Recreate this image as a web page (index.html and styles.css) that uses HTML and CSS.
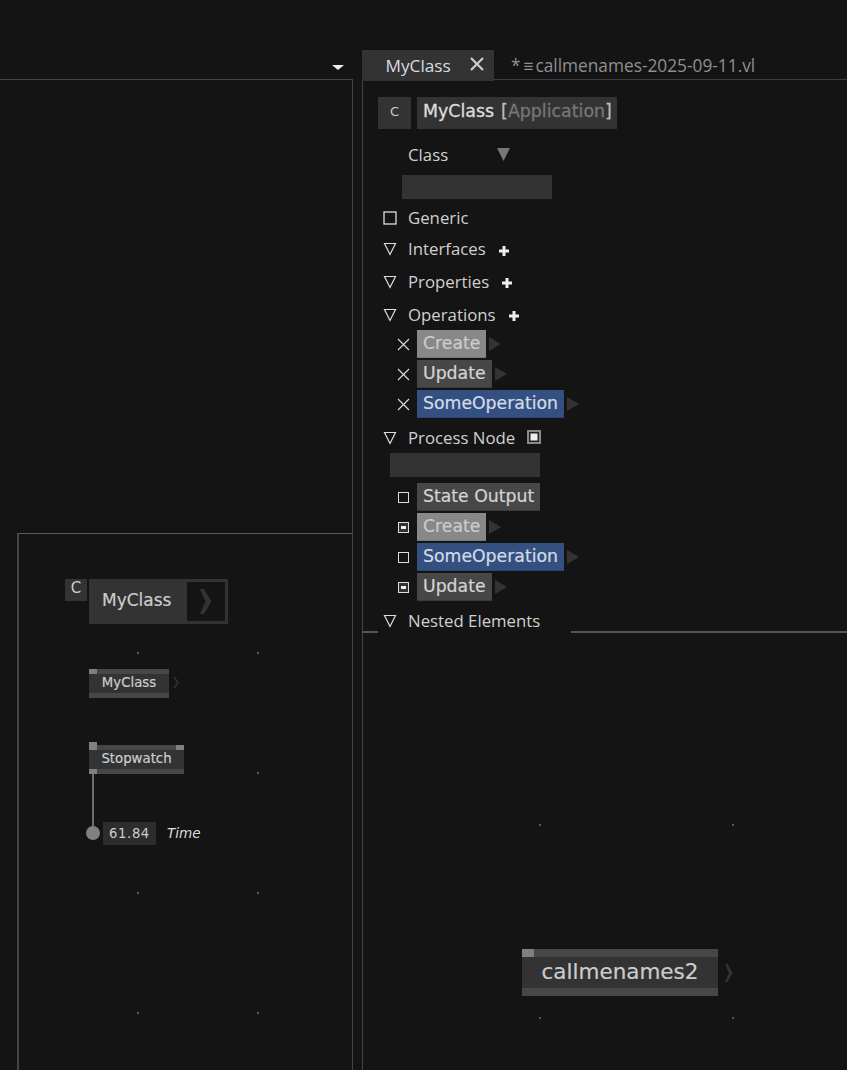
FILE: index.html
```html
<!DOCTYPE html>
<html lang="en">
<head>
<meta charset="utf-8">
<title>MyClass</title>
<link rel="stylesheet" href="styles.css">
</head>
<body>
<div class="app">
  <section class="left">
    <div class="left-head"><span class="doc-menu"></span></div>
    <div class="left-body">
      <div class="patch">
        <i class="dot" style="left:118px;top:118px"></i><i class="dot" style="left:238px;top:118px"></i>
        <i class="dot" style="left:238px;top:238px"></i>
        <i class="dot" style="left:118px;top:358px"></i><i class="dot" style="left:238px;top:358px"></i>
        <i class="dot" style="left:118px;top:478px"></i><i class="dot" style="left:238px;top:478px"></i>
        <div class="c-badge">C</div>
        <div class="def-node"><span class="def-name">MyClass</span><span class="def-open"><svg width="13" height="25" viewBox="0 0 13 25"><path d="M1 0h4l7.500 12.500L5 25H1l5.500-12.500z" fill="#333"/></svg></span></div>
        <div class="node node-myclass"><i class="pin pin-l"></i><span>MyClass</span></div>
        <svg class="chev chev-myclass" width="7" height="13" viewBox="0 0 7 13"><path d="M1 1l4 5.500-4 5.500" fill="none" stroke="#333" stroke-width="1.500"/></svg>
        <div class="node node-stopwatch"><i class="pin pin-l pin-top"></i><i class="pin pin-r"></i><i class="pin pin-b"></i><span>Stopwatch</span></div>
        <i class="link"></i><i class="io-dot"></i>
        <div class="value">61.84</div>
        <div class="value-label">Time</div>
      </div>
    </div>
  </section>
  <section class="right">
    <div class="tabs">
      <div class="tab"><span>MyClass</span><svg class="tab-x" width="16" height="16" viewBox="0 0 16 16"><path d="M2 2l12 12M14 2L2 14" stroke="#ccd" stroke-width="2.200"/></svg></div>
      <div class="tab-doc"><span class="star">*</span><span class="menu">≡</span><span>callmenames-2025-09-11.vl</span></div>
    </div>
    <div class="class-view">
      <div class="title"><div class="title-c">C</div><div class="title-name">MyClass <span class="bracket">[<span class="app-type">Application</span>]</span></div></div>
      <div class="kind"><span>Class</span><svg width="13" height="13" viewBox="0 0 13 13"><path d="M0 0h13L6.500 13z" fill="#777"/></svg></div>
      <div class="input input-a"></div>
      <div class="row row-generic"><svg class="ic" width="14" height="14" viewBox="0 0 14 14"><rect x="1" y="1" width="12" height="12" fill="none" stroke="#ddd" stroke-width="1.300"/></svg><span>Generic</span></div>
      <div class="row row-interfaces"><svg class="ic" width="14" height="14" viewBox="0 0 14 14"><path d="M1.500 1.500h11L7 12.500z" fill="none" stroke="#ddd" stroke-width="1.200"/></svg><span>Interfaces</span><svg class="plus" width="10" height="10" viewBox="0 0 10 10"><path d="M5 0v10M0 5h10" stroke="#eee" stroke-width="3"/></svg></div>
      <div class="row row-gap"><svg class="ic" width="14" height="14" viewBox="0 0 14 14"><path d="M1.500 1.500h11L7 12.500z" fill="none" stroke="#ddd" stroke-width="1.200"/></svg><span>Properties</span><svg class="plus" width="10" height="10" viewBox="0 0 10 10"><path d="M5 0v10M0 5h10" stroke="#eee" stroke-width="3"/></svg></div>
      <div class="row row-gap"><svg class="ic" width="14" height="14" viewBox="0 0 14 14"><path d="M1.500 1.500h11L7 12.500z" fill="none" stroke="#ddd" stroke-width="1.200"/></svg><span>Operations</span><svg class="plus" width="10" height="10" viewBox="0 0 10 10"><path d="M5 0v10M0 5h10" stroke="#eee" stroke-width="3"/></svg></div>
      <div class="ops ops-a">
        <div class="op"><svg class="oc" width="13" height="13" viewBox="0 0 13 13"><path d="M1 1l11 11M12 1L1 12" stroke="#ddd" stroke-width="1.100"/></svg><span class="chip chip-light">Create</span><i class="tri"></i></div>
        <div class="op"><svg class="oc" width="13" height="13" viewBox="0 0 13 13"><path d="M1 1l11 11M12 1L1 12" stroke="#ddd" stroke-width="1.100"/></svg><span class="chip">Update</span><i class="tri"></i></div>
        <div class="op"><svg class="oc" width="13" height="13" viewBox="0 0 13 13"><path d="M1 1l11 11M12 1L1 12" stroke="#ddd" stroke-width="1.100"/></svg><span class="chip chip-blue">SomeOperation</span><i class="tri"></i></div>
      </div>
      <div class="row row-process"><svg class="ic" width="14" height="14" viewBox="0 0 14 14"><path d="M1.500 1.500h11L7 12.500z" fill="none" stroke="#ddd" stroke-width="1.200"/></svg><span>Process Node</span><i class="proc-check"></i></div>
      <div class="input input-b"></div>
      <div class="ops ops-b">
        <div class="op"><i class="box"></i><span class="chip">State Output</span></div>
        <div class="op"><i class="box box-on"></i><span class="chip chip-light">Create</span><i class="tri"></i></div>
        <div class="op"><i class="box"></i><span class="chip chip-blue">SomeOperation</span><i class="tri"></i></div>
        <div class="op"><i class="box box-on"></i><span class="chip">Update</span><i class="tri"></i></div>
      </div>
      <div class="row row-nested"><svg class="ic" width="14" height="14" viewBox="0 0 14 14"><path d="M1.500 1.500h11L7 12.500z" fill="none" stroke="#ddd" stroke-width="1.200"/></svg><span>Nested Elements</span></div>
    </div>
    <div class="app-canvas">
      <i class="dot" style="left:176px;top:191px"></i><i class="dot" style="left:369px;top:191px"></i>
      <i class="dot" style="left:176px;top:384px"></i><i class="dot" style="left:369px;top:384px"></i>
      <div class="node node-app"><i class="pin pin-l"></i><span>callmenames2</span></div>
      <svg class="chev chev-app" width="9" height="20" viewBox="0 0 9 20"><path d="M1 1h2.500l5 9-5 9H1l4-9z" fill="#333"/></svg>
    </div>
  </section>
</div>
</body>
</html>
```

FILE: styles.css
```css
* { box-sizing: border-box; }
html, body { margin: 0; height: 100%; background: #141414; overflow: hidden; }
i { display: block; }
.app { display: flex; width: 847px; height: 1070px; background: #141414; color: #d0d0d0; font-family: "Open Sans", "Noto Sans", sans-serif; }

/* left document pane */
.left { width: 353px; flex: none; display: flex; flex-direction: column; }
.left-head { height: 80px; border-bottom: 1px solid #444; display: flex; align-items: flex-start; justify-content: flex-end; padding: 65px 9px 0 0; }
.doc-menu { width: 0; height: 0; border-left: 6px solid transparent; border-right: 6px solid transparent; border-top: 5px solid #eee; }
.left-body { flex: 1; border-right: 1px solid #444; padding: 453px 0 0 17px; display: flex; }
.patch { position: relative; flex: 1; border-left: 2px solid #444; border-top: 1px solid #5a5a5a; }
.dot { position: absolute; width: 2px; height: 2px; background: #555; }

.c-badge { position: absolute; left: 46px; top: 45px; width: 22px; height: 22px; background: #333; color: #ccc; font: 15px/19px "DejaVu Sans", sans-serif; text-align: center; }
.def-node { position: absolute; left: 70px; top: 45px; width: 139px; height: 45px; background: #333; display: flex; align-items: center; padding: 3px; color: #ccc; font: 17px/24px "DejaVu Sans", sans-serif; -webkit-text-stroke: .2px #ccc; }
.def-name { flex: 1; padding: 0 0 3px 10px; }
.def-open { width: 38px; height: 39px; background: #141414; display: flex; align-items: center; justify-content: center; padding-right: 1px; }

.node { position: absolute; background: #333; border-top: 5px solid #474747; border-bottom: 5px solid #474747; color: #ccc; font-family: "DejaVu Sans", sans-serif; display: flex; align-items: center; justify-content: center; -webkit-text-stroke: .2px #ccc; }
.node span { padding-bottom: 3px; }
.pin { position: absolute; background: #808080; width: 8px; height: 5px; }
.pin-l { left: 0; top: -5px; }
.pin-top { top: -8px; height: 8px; }
.pin-r { right: 0; top: -5px; }
.pin-b { left: 0; bottom: -5px; }
.node-myclass { left: 70px; top: 135px; width: 80px; height: 29px; font-size: 13.300px; }
.node-stopwatch { left: 70px; top: 211px; width: 95px; height: 29px; font-size: 13.300px; }
.chev { position: absolute; }
.chev-myclass { left: 154px; top: 142px; }
.link { position: absolute; left: 73px; top: 240px; width: 2px; height: 56px; background: #6e6e6e; }
.io-dot { position: absolute; left: 67px; top: 292px; width: 14px; height: 14px; border-radius: 50%; background: #808080; }
.value { position: absolute; left: 84px; top: 288px; width: 53px; height: 23px; background: #2d2d2d; color: #ccc; font: 13.200px/23px "DejaVu Sans", sans-serif; text-align: center; letter-spacing: .6px; }
.value-label { position: absolute; left: 148px; top: 290px; color: #ddd; font: italic 13.600px/18px "DejaVu Sans", sans-serif; }

/* right pane */
.right { width: 485px; margin-left: 9px; flex: none; display: flex; flex-direction: column; }
.tabs { display: flex; align-items: flex-start; height: 81px; padding-top: 50px; }
.tab { width: 132px; height: 31px; background: #333; display: flex; align-items: center; padding-left: 23.500px; gap: 18px; font-size: 17.200px; color: #d8dce0; }
.tab-x { margin-top: -4px; }
.tab-doc { flex: 1; height: 30px; border-bottom: 1px solid #3c3c3c; display: flex; align-items: center; padding: 1px 0 0 17px; color: #8f8f8f; font-size: 17.300px; }
.star { margin-right: 3px; }
.menu { margin-right: 2px; font-size: 17px; }

.class-view { height: 552px; border-left: 1px solid #444; border-bottom: 2px solid #555; padding: 16px 0 0 0; font-size: 16.800px; font-family: "Open Sans", "Noto Sans", sans-serif; display: flex; flex-direction: column; align-items: flex-start; }
.title { display: flex; gap: 6px; margin-left: 15px; height: 32px; }
.title-c { width: 33px; background: #333; color: #ccc; text-align: center; font: 13px/30px "DejaVu Sans", sans-serif; }
.title-name { width: 200px; padding-left: 6px; background: #333; color: #ddd; font: 17.400px/28px "DejaVu Sans", sans-serif; white-space: nowrap; word-spacing: 1.500px; -webkit-text-stroke: .3px #ddd; }
.bracket { color: #bbb; -webkit-text-stroke: .3px #bbb; }
.app-type { color: #777; -webkit-text-stroke: .3px #777; }
.kind { display: flex; align-items: center; height: 24px; margin: 14px 0 0 45px; gap: 49px; }
.input { height: 24px; width: 150px; background: #333; }
.input-a { margin: 8px 0 0 39px; }
.input-b { margin: 4px 0 0 27px; }
.row { display: flex; align-items: center; height: 24px; padding-left: 20px; }
.row .ic { margin: 1px 11px 0 0; flex: none; }
.row-generic { margin-top: 7px; }
.row-interfaces { margin-top: 7px; }
.row-gap { margin-top: 9px; }
.plus { margin: 4px 0 0 13px; }
.ops { display: flex; flex-direction: column; gap: 2px; padding-left: 34px; }
.ops-a { margin-top: 4px; }
.ops-b { margin-top: 6px; }
.op { display: flex; align-items: center; height: 28px; }
.oc { margin-right: 7px; flex: none; }
.chip { height: 28px; padding: 0 6px; background: #474747; color: #d4d4d4; border-bottom: 1px solid #3a3a3a; font: 17.300px/26px "DejaVu Sans", sans-serif; white-space: nowrap; -webkit-text-stroke: .2px currentColor; }
.chip-light { background: #888; border-bottom-color: #777; color: #ccc; }
.chip-blue { background: #345080; border-bottom-color: #2d4670; color: #d4dbe8; }
.tri { width: 0; height: 0; margin-left: 3px; border-left: 12px solid #333; border-top: 7px solid transparent; border-bottom: 7px solid transparent; }
.box { width: 11px; height: 11px; margin: 0 8px 0 1px; border: 1.500px solid #ddd; display: flex; align-items: center; justify-content: center; }
.box-on { background: #333; }
.box-on::after { content: ""; width: 5px; height: 3px; background: #eee; }
.row-process { margin-top: 7px; }
.proc-check { width: 14px; height: 14px; margin-left: 12px; border: 2px solid #888; background: #eee; box-shadow: inset 0 0 0 1.500px #222; }
.row-nested { margin-top: 6px; margin-left: 15px; padding-left: 5px; width: 193px; background: #141414; height: 26px; margin-bottom: -2px; align-self: flex-start; }

.app-canvas { position: relative; flex: 1; border-left: 1px solid #444; }
.node-app { left: 159px; top: 316px; width: 196px; height: 47px; font-size: 21.500px; border-top-width: 8px; border-bottom-width: 8px; }
.node-app span { padding-bottom: 2px; }
.node-app .pin-l { width: 12px; height: 8px; top: -8px; }
.chev-app { left: 361px; top: 330px; }
```
